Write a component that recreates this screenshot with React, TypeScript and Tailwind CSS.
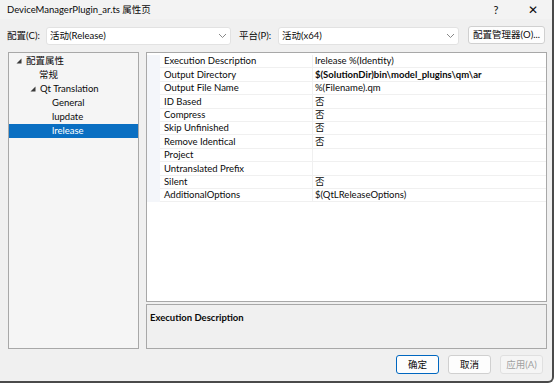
import React from "react";

const rows: [string, string, boolean?][] = [
  ["Execution Description", "lrelease %(Identity)"],
  ["Output Directory", "$(SolutionDir)bin\\model_plugins\\qm\\ar", true],
  ["Output File Name", "%(Filename).qm"],
  ["ID Based", "否"],
  ["Compress", "否"],
  ["Skip Unfinished", "否"],
  ["Remove Identical", "否"],
  ["Project", ""],
  ["Untranslated Prefix", ""],
  ["Silent", "否"],
  ["AdditionalOptions", "$(QtLReleaseOptions)"],
];

const font = { fontFamily: 'Lato, "Noto Sans CJK SC", sans-serif' };

function Chevron() {
  return (
    <svg width="9" height="6" viewBox="0 0 9 6" className="text-[#888]">
      <path d="M1 1l3.5 3.5L8 1" fill="none" stroke="currentColor" strokeWidth="1" />
    </svg>
  );
}

function Tri() {
  return (
    <svg width="6" height="6" viewBox="0 0 6 6">
      <path d="M5.5 0.5V5.5H0.5Z" fill="#3a3a3a" />
    </svg>
  );
}

export default function App() {
  return (
    <div
      className="w-[554px] h-[383px] bg-[#f0f0f0] text-[9.5px] leading-none text-[#0a0a0a] flex flex-col overflow-hidden border-r-2 border-b-2 border-[#4a4a4a] rounded-br-[6px] relative whitespace-nowrap"
      style={font}
    >
      {/* title bar */}
      <div className="h-[19px] bg-[#f3f3f3] flex items-center pl-[7px] pr-[14px] shrink-0">
        <span className="flex-1 text-[9.5px]">DeviceManagerPlugin_ar.ts 属性页</span>
        <span className="w-[20px] text-center text-[11px]">?</span>
        <span className="w-[32px] text-right text-[12px]">✕</span>
      </div>
      {/* toolbar */}
      <div className="h-[24px] mt-[5px] flex items-center pl-[7px] shrink-0">
        <span className="w-[39px]">配置(C):</span>
        <div className="w-[185px] h-[18px] bg-white border border-[#e2e2e2] rounded-[3px] flex items-center pl-[3px] pr-[3px]">
          <span className="flex-1">活动(Release)</span>
          <Chevron />
        </div>
        <span className="w-[39px] ml-[8px]">平台(P):</span>
        <div className="w-[181px] h-[18px] bg-white border border-[#e2e2e2] rounded-[3px] flex items-center pl-[3px] pr-[3px]">
          <span className="flex-1">活动(x64)</span>
          <Chevron />
        </div>
        <div className="ml-[9px] w-[77px] h-[18px] bg-[#fdfdfd] border border-[#d0d0d0] rounded-[3px] flex items-center justify-center -mt-[2px]">
          配置管理器(O)...
        </div>
      </div>
      {/* main */}
      <div className="flex mt-[4px] pl-[8px] h-[297px] shrink-0">
        {/* tree */}
        <div className="w-[131px] h-[297px] bg-[#f5f5f5] border border-[#a8a8a8] flex flex-col pt-[1px]">
          <div className="flex items-center h-[14px] pl-[7px]">
            <Tri />
            <span className="ml-[4px]">配置属性</span>
          </div>
          <div className="h-[14px] pl-[30px] flex items-center">常规</div>
          <div className="flex items-center h-[14px] pl-[21px]">
            <Tri />
            <span className="ml-[4px]">Qt Translation</span>
          </div>
          <div className="h-[14px] pl-[43px] flex items-center">General</div>
          <div className="h-[14px] pl-[43px] flex items-center">lupdate</div>
          <div className="h-[14px] pl-[43px] flex items-center bg-[#0a6fc2] text-white">lrelease</div>
        </div>
        {/* right */}
        <div className="ml-[7px] w-[401px] flex flex-col">
          <div className="h-[251px] bg-white border border-[#a8a8a8] pt-[2px]">
            {rows.map(([k, v, b], i) => (
              <div key={i} className="flex h-[13.4px] items-center">
                <div className="w-[13px] h-full bg-[#f4f6fa] shrink-0" />
                <div className="w-[152px] h-full border-b border-[#f0f0f0] flex items-center pl-[4px] shrink-0">{k}</div>
                <div className="flex-1 h-full border-b border-l border-[#f0f0f0] flex items-center pl-[2px]">
                  <span className={b ? "font-bold" : ""}>{v}</span>
                </div>
              </div>
            ))}
          </div>
          <div className="h-[45px] mt-[2px] bg-[#f0f0f0] border border-[#a8a8a8] px-[3px] pt-[8px]">
            <span className="font-bold">Execution Description</span>
          </div>
        </div>
      </div>
      {/* buttons */}
      <div className="flex justify-end gap-[9px] pr-[9px] mt-[6px]">
        <div className="w-[43px] h-[19px] bg-[#fdfdfd] border border-[#0067c0] rounded-[3px] flex items-center justify-center">确定</div>
        <div className="w-[43px] h-[19px] bg-[#fdfdfd] border border-[#d0d0d0] rounded-[3px] flex items-center justify-center">取消</div>
        <div className="w-[43px] h-[19px] bg-[#f5f5f5] border border-[#e0e0e0] rounded-[3px] flex items-center justify-center text-[#a0a0a0]">应用(A)</div>
      </div>
    </div>
  );
}
